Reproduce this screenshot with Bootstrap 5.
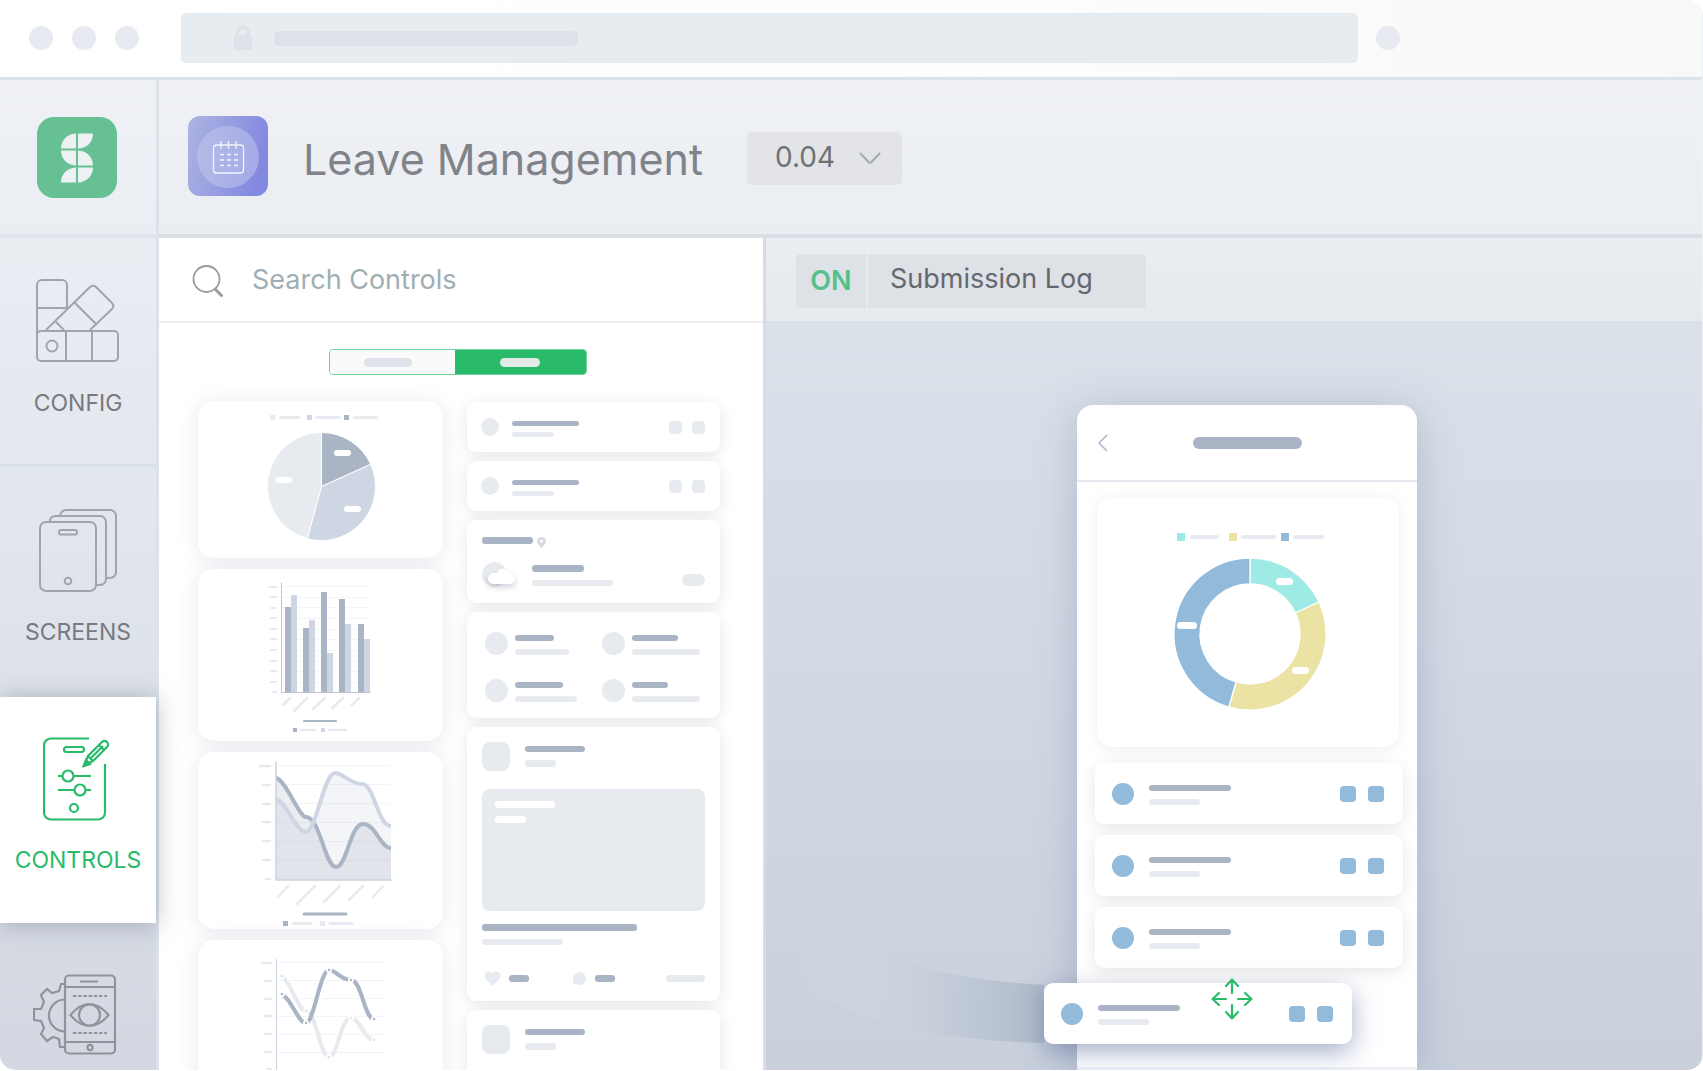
<!DOCTYPE html>
<html lang="en">
<head>
<meta charset="utf-8">
<meta name="viewport" content="width=device-width, initial-scale=1">
<title>Leave Management</title>
<link href="https://cdn.jsdelivr.net/npm/bootstrap@5.3.0/dist/css/bootstrap.min.css" rel="stylesheet">
<style>
:root{--ink:#a9b4c5;--mid:#cfd6e3;--pale:#e7ebf0;--rule:#dbe2ea;--green:#2abb6a;--blue:#91badb}
body{font-family:Inter,"Liberation Sans",sans-serif;background:#fff;overflow:hidden}
svg{display:block;flex:none}
.app-frame{height:100vh;border-radius:16px;overflow:hidden;border-bottom:1px solid #fff;border-right:1px solid #eef1f5}
/* browser chrome */
.chrome{height:80px;border-bottom:3px solid #dde2ea;background:linear-gradient(90deg,#fff,#fefefe 50%,#f8f8f8);padding:0 29px 2px}
.dots{gap:19px}
.dot-c{width:24px;height:24px;border-radius:50%;background:#e7eaf0}
.address{width:1177px;height:50px;border-radius:5px;background:#e7ecf0;margin:0 18px 0 42px;padding-left:53px}
.address-text{width:304px;height:15px;border-radius:5px;background:#dde2e9;margin:2px 0 0 22px}
.shell{background:linear-gradient(#eff1f5,#e3e7ee 40%,#d2d7e1);min-height:0}
/* sidebar */
.side{width:159px;border-right:3px solid var(--rule)}
.brand-cell{height:158px;border-bottom:4px solid #dfe4ea;padding-top:37px;padding-left:37px}
.tile{height:229px;border-bottom:3px solid #d8e0e9;padding-top:41px;color:#777a80;font-size:23px;line-height:24px;font-weight:400;text-decoration:none}
.tile svg{color:#a1a4aa;margin-bottom:28px}
.tile.active{background:#fff;color:var(--green);border-bottom:0;box-shadow:0 2px 24px rgba(95,105,120,.42);margin:1px 0 2px;height:226px;padding-top:40px}
.tile.active svg{color:var(--green);margin-right:4px;margin-bottom:27px}
.tile.last svg{color:#8f949c;margin-top:8px;margin-right:6px}
/* heading row */
.app-head{height:158px;border-bottom:4px solid #d9dfe5;padding:0 29px 2px}
.app-title{font-size:43px;line-height:48px;font-weight:400;color:#808388;margin:5px 44px 0 35px}
.version{width:155px;height:53px;margin-top:5px}
.version select{appearance:none;width:100%;height:100%;border:0;border-radius:5px;background:#e2e4e8;color:#6f7275;font-size:28px;padding:0 0 4px 28px}
.version svg{position:absolute;right:21px;top:20px;pointer-events:none}
/* controls panel */
.panel{width:607px;flex:none;background:#fff;border-right:3px solid #d6dde5;overflow:hidden}
.search{height:85px;border-bottom:2px solid #efefef;padding-left:33px;margin:0}
.search svg{margin-top:3px}
.search input{border:0;outline:0;background:none;font-size:27px;line-height:32px;width:400px;padding:0;margin:1px 0 0 28px}
.search input::placeholder{color:#a0aeb3;opacity:1}
.segment{display:grid;grid-template-columns:126fr 132fr;width:258px;height:26px;margin:26px 176px 26px 170px;border:1px solid #6fd19b;border-radius:4px;overflow:hidden}
.segment button{border:0;background:#fafafa;padding:0}
.segment button+button{background:var(--green)}
.segment i{display:block;width:48px;height:9px;border-radius:5px;background:#dfe2ea;margin:auto;margin-left:34px}
.segment button+button i{width:40px;background:#e3ebe8;margin-left:45px}
.widgets{display:grid;grid-template-columns:245fr 253fr;column-gap:24px;padding:0 43px 0 39px}
.stack-l{gap:11px}.stack-r{gap:9px;padding-top:1px}
.tilecard{background:#fff;border-radius:16px;box-shadow:0 2px 20px rgba(90,90,140,.14)}
.tilecard svg{width:100%;height:auto}
.slab{background:#fff;border-radius:9px;box-shadow:0 3px 16px rgba(0,0,0,.1)}
/* placeholder strokes */
.ln{display:block;height:6px;border-radius:3px;background:var(--pale)}
.ln.dk{background:var(--ink)}.ln.wh{background:#fff}.ln.fat{height:7px}
.w20{width:20px}.w31{width:31px}.w36{width:36px}.w39{width:39px}.w42{width:42px}.w46{width:46px}.w48{width:48px}.w51{width:51px}.w52{width:52px}.w54{width:54px}.w60{width:60px}.w62{width:62px}.w67{width:67px}.w68{width:68px}.w81{width:81px}.w82{width:82px}.w155{width:155px}
.round{border-radius:50%;background:var(--pale);flex:none}
.sq{border-radius:4px;background:var(--pale);flex:none}
.item{height:50px;padding:0 15px 0 14px}
.item .round{width:18px;height:18px;margin-right:13px}
.item .sq{width:13px;height:13px;margin-left:10px}
.item .ln{height:5px}.item .ln+.ln{margin-top:6px}
.weather{height:83px;padding:17px 15px 0}
.weather-row{margin-top:13px}
.toggle{width:23px;height:12px;border-radius:6px;background:var(--pale);margin-top:6px}
.facts{height:106px;padding:20px 0 0 18px;display:grid;grid-template-columns:117px 1fr;grid-auto-rows:47px}
.facts .round{width:23px;height:23px;margin-right:7px}
.facts .ln+.ln{margin-top:8px}
.facts .pair{padding-top:3px}
.post{height:274px;padding:15px 15px 0}
.avatar{width:28px;height:29px;border-radius:8px;background:var(--pale);margin-right:15px}
.photo{height:122px;border-radius:8px;background:var(--pale);margin:18px 0 13px;padding:12px 13px}
.post-foot{margin-top:26px}
.like{margin:0 8px 0 2px}
.reply{margin:0 9px 0 44px}
/* canvas */
.canvas{min-width:0;background:linear-gradient(#dde3eb,#c9d0dc)}
.toolbar{height:85px;border-bottom:2px solid #dbe0e8;background:linear-gradient(#eaedf1,#e6e9ee);padding:3px 30px 0}
.toolbar button{height:54px;border:0;background:#dee1e6;color:#65686e;font-size:27px;padding:0}
.toolbar .state{width:70px;border-radius:4px 0 0 4px;color:#55c088;font-weight:600}
.toolbar .log{width:278px;border-radius:0 4px 4px 0;margin-left:2px;text-align:left;padding:0 0 4px 22px}
.stage{padding:82px 0 0 26px;min-height:0}
.phone{width:340px;background:#fff;border-radius:16px 16px 0 0;border-bottom:3px solid #eef1f6;box-shadow:0 6px 40px rgba(110,120,165,.38)}
.phone-head{height:77px;border-bottom:2px solid #e6eaf0;padding:0 21px}
.phone-head i{width:109px;height:12px;border-radius:6px;background:var(--ink)}
.back-space{width:9px}
.phone-body{padding:15px 14px 0 18px}
.phone-body .tilecard{margin:0 4px 16px 2px;box-shadow:0 2px 14px rgba(90,90,140,.1)}
.entry{width:308px;height:61px;padding:0 19px 0 17px;margin-bottom:11px}
.entry .round{width:22px;height:22px;background:var(--blue);margin-right:15px}
.entry .sq{width:16px;height:16px;background:var(--blue);margin-left:12px}
.entry .ln+.ln{margin-top:8px}
.entry .pair{padding-top:2px}
.dragged{position:absolute;left:-33px;top:578px;box-shadow:0 8px 26px rgba(80,100,150,.5)}
.dragged .mover{position:absolute;left:167px;top:-5px}
.trail{position:absolute;left:-273px;top:520px}
</style>
<script src="https://cdn.jsdelivr.net/npm/bootstrap@5.3.0/dist/js/bootstrap.bundle.min.js"></script>
</head>
<body>
<div class="app-frame d-flex flex-column">
  <header class="chrome d-flex align-items-center flex-shrink-0">
    <div class="dots d-flex flex-shrink-0"><span class="dot-c"></span><span class="dot-c"></span><span class="dot-c"></span></div>
    <div class="address d-flex align-items-center">
      <svg width="18" height="24" viewBox="0 0 18 24"><rect y="9" width="18" height="15" rx="2" fill="#dde1e8"/><path d="M3.500 10V7a5.500 5.500 0 0 1 11 0v3" fill="none" stroke="#dde1e8" stroke-width="3"/></svg>
      <span class="address-text"></span>
    </div>
    <span class="dot-c flex-shrink-0"></span>
  </header>

  <div class="shell d-flex flex-fill">
    <nav class="side d-flex flex-column flex-shrink-0" aria-label="Sections">
      <div class="brand-cell flex-shrink-0">
        <svg width="80" height="81" viewBox="0 0 80 81"><rect width="80" height="81" rx="17" fill="#67c093"/>
          <g fill="#eef1f4"><path d="M39 16.500V31.500H24C24 23 31 16.500 39 16.500zM41 16.500H56C56 25 50 31.500 41 31.500zM24 33.500H39V48.500C30 48 24 42 24 33.500zM41 33.500C50 34 56 40 56 48.500H41zM39 50.500V65.500H24C24 57 30 51 39 50.500zM41 50.500H56C56 59 49 65.500 41 65.500z"/></g></svg>
      </div>
      <a href="#" class="tile d-flex flex-column align-items-center flex-shrink-0">
        <svg width="84" height="84" viewBox="0 0 84 84" fill="none" stroke="currentColor" stroke-width="2"><path d="M1 55V6a5 5 0 0 1 5-5h20a5 5 0 0 1 5 5v25M2 29h29M10 51L54 8a4 4 0 0 1 6 0L76 24a4 4 0 0 1 0 6L54 51M39 24l21 21M20 43l8 8"/><rect x="1" y="52" width="81" height="30" rx="4"/><path d="M30 52v31M56 52v31"/><circle cx="16" cy="67" r="5.500"/></svg>
        CONFIG</a>
      <a href="#" class="tile d-flex flex-column align-items-center flex-shrink-0">
        <svg width="78" height="84" viewBox="0 0 78 84" fill="none" stroke="currentColor" stroke-width="2"><rect x="1" y="14" width="56" height="69" rx="6"/><path d="M11 13.500C11 10 13 8 17 8h44a6 6 0 0 1 6 6v57a6 6 0 0 1-6 6h-4M21 7.500C22 4 24 2 27 2h44a6 6 0 0 1 6 6v56a6 6 0 0 1-6 6h-4"/><rect x="20" y="22" width="18" height="4.500" rx="2"/><circle cx="29" cy="73" r="3.300"/></svg>
        SCREENS</a>
      <a href="#" class="tile active d-flex flex-column align-items-center flex-shrink-0 position-relative" aria-current="page">
        <svg width="67" height="84" viewBox="0 0 67 84" fill="none" stroke="currentColor" stroke-width="2.200"><path d="M46 1.500H8a7 7 0 0 0-7 7v67a7 7 0 0 0 7 7h47a7 7 0 0 0 7-7V27"/><rect x="21" y="10" width="20" height="5" rx="2.500"/><path d="M41 28l4-9L59 5a3.500 3.500 0 0 1 5 5L50 24zM45 19l5 5M56 8l5 5M48 21L60 9"/><path d="M41 29l2-6 4 4z" fill="currentColor"/><path d="M15 39h4M31 39h17M15 53h17M43 53h5"/><circle cx="25" cy="39" r="5.500"/><circle cx="37" cy="53" r="5.500"/><circle cx="31" cy="71" r="4"/></svg>
        CONTROLS</a>
      <a href="#" class="tile last d-flex flex-column align-items-center flex-shrink-0" aria-label="Preview">
        <svg width="84" height="82" viewBox="0 0 84 82" fill="none" stroke="currentColor" stroke-width="2.200"><rect x="32" y="1.500" width="50" height="78" rx="4"/><path d="M32 13h50M32 68h50M47 7.500h18"/><circle cx="57" cy="73.500" r="2.600"/><path d="M37.500 41q9-11 19-11t19 11q-9 11-19 11t-19-11z"/><circle cx="56.500" cy="41" r="10.500"/><path d="M40 22h34M40 59h34" stroke-dasharray="3.500 1.700"/><path d="M32 10h-4l-2 7-7 2-5-4-6 6 3 7-3 7H1v11l7 1 3 7-3 6 6 7 6-4 6 2 1 8h5M32 25.500a16 16 0 0 0 0 32"/></svg>
      </a>
    </nav>

    <main class="flex-fill d-flex flex-column" style="min-width:0">
      <header class="app-head d-flex align-items-center flex-shrink-0">
        <svg width="80" height="80" viewBox="0 0 80 80"><defs><linearGradient id="appfill" x1="0" y1="0" x2="1" y2=".25"><stop offset="0" stop-color="#adb4e1"/><stop offset=".5" stop-color="#989fe1"/><stop offset="1" stop-color="#8389e0"/></linearGradient></defs><rect width="80" height="80" rx="12" fill="url(#appfill)"/><circle cx="40" cy="41" r="31" fill="#c3caed" opacity=".5"/><g fill="none" stroke="#f2f4fb" stroke-width="1.300"><rect x="25.500" y="29" width="30" height="28" rx="3"/><path d="M33 25v8M40.500 25v8M48 25v8"/><path d="M32 38.500h4m3 0h4m3 0h4M32 44h4m3 0h4m3 0h4M32 49.500h4m3 0h4m3 0h4"/></g></svg>
        <h1 class="app-title text-nowrap">Leave Management</h1>
        <div class="version position-relative flex-shrink-0">
          <select aria-label="Version"><option>0.04</option></select>
          <svg width="22" height="13" viewBox="0 0 22 13" fill="none" stroke="#9cabb3" stroke-width="2"><path d="M1 1l8.500 9q1.500 1.500 3 0L21 1"/></svg>
        </div>
      </header>

      <div class="d-flex flex-fill" style="min-height:0">
        <section class="panel">
          <label class="search d-flex align-items-center">
            <svg width="32" height="32" viewBox="0 0 32 32" fill="none" stroke="#9b9b9b"><circle cx="14.500" cy="14" r="13" stroke-width="1.800"/><path d="M24 25l5.500 5.500" stroke-width="3" stroke-linecap="round"/></svg>
            <input type="search" placeholder="Search Controls" aria-label="Search Controls">
          </label>
          <div class="segment">
            <button type="button" aria-label="First set"><i></i></button>
            <button type="button" aria-label="Second set"><i></i></button>
          </div>
          <div class="widgets">
            <div class="stack-l d-flex flex-column">
              <div class="tilecard">
                <svg viewBox="0 0 245 157"><g fill="#e7eaef"><rect x="72" y="14" width="5" height="5"/><rect x="81" y="15" width="21" height="3" rx="1.500"/><rect x="117" y="15" width="26" height="3" rx="1.500"/><rect x="155" y="15" width="25" height="3" rx="1.500"/></g><rect x="109" y="14" width="5" height="5" fill="#cfd6e3"/><rect x="146" y="14" width="5" height="5" fill="#a9b4c5"/>
                <g stroke="#fff" stroke-width="1"><path d="M123.500 85.500V31.500A54 54 0 0 1 172.700 63.300z" fill="#a9b4c5"/><path d="M123.500 85.500L172.700 63.300A54 54 0 0 1 109.200 137.600z" fill="#cfd6e3"/><path d="M123.500 85.500L109.200 137.600A54 54 0 0 1 123.500 31.500z" fill="#e7ebf0"/></g>
                <g fill="#fff"><rect x="136" y="49" width="17" height="6" rx="3"/><rect x="77" y="76" width="17" height="6" rx="3"/><rect x="146" y="105" width="17" height="6" rx="3"/></g></svg>
              </div>
              <div class="tilecard">
                <svg viewBox="0 0 245 172" fill="none" stroke-linecap="round"><path stroke="#f4f5f8" d="M84 17.500h88M84 28.500h88M84 38.500h88M84 49.500h88M84 60.500h88M84 70.500h88M84 81.500h88M84 92.500h88M84 102.500h88M84 113.500h88"/>
                <path stroke="#e7eaf0" stroke-width="2" d="M71 18h7M73 28h5M73 39h5M73 49h5M73 60h5M73 70h5M73 81h5M73 92h5M73 102h5M73 113h5M75 123h3"/>
                <path fill="#a9b4c5" d="M87 38h6v86h-6zM105 59h6v65h-6zM123 23h6v101h-6zM141 30h6v94h-6zM160 55h6v69h-6z"/><path fill="#cfd6e3" d="M93 26h6v98h-6zM111 51h6v73h-6zM129 84h6v40h-6zM147 55h6v69h-6zM166 70h6v54h-6z"/>
                <path stroke="#bcc4d4" d="M83.500 14v109.500H172"/><path stroke="#e7eaf0" stroke-width="2.500" d="M85 136l7-7M96 142l13-13M115 140l12-11M134 139l11-10M154 136l7-7"/>
                <path stroke="#a9b4c5" stroke-width="2" d="M106 152h32"/><path fill="#a9b4c5" d="M95 159h4v4h-4z"/><path fill="#cfd6e3" d="M123 159h4v4h-4z"/><path stroke="#e7eaf0" stroke-width="2.500" d="M103 161h14M131 161h17"/></svg>
              </div>
              <div class="tilecard">
                <svg viewBox="0 0 245 177" fill="none" stroke-linecap="round">
                <path fill="#f3f5f9" d="M78 47C88 49 98 80 108 80S126 21 137 21C145 21 152 32 164 32S180 74 193 74V128H78z"/><path fill="#8f94a8" fill-opacity=".17" d="M78 26C88 28 101 65 108 65C122 65 127 115 138 115S152 72 165 72S182 96 193 96V128H78z"/>
                <path stroke="#8f94a8" stroke-opacity=".1" d="M79 13.500h113M79 32.500h113M79 51.500h113M79 70.500h113M79 89.500h113M79 108.500h113"/>
                <path stroke="#e7eaf0" stroke-width="2.500" d="M62 14h10M65 33h7M65 52h7M65 70h7M65 89h7M65 108h7M68 127h4"/>
                <path stroke="#a9b4c5" stroke-width="4" stroke-linecap="butt" d="M78 26C88 28 101 65 108 65C122 65 127 115 138 115S152 72 165 72S182 96 193 96"/><path stroke="#cfd6e3" stroke-width="4" stroke-linecap="butt" d="M78 47C88 49 98 80 108 80S126 21 137 21C145 21 152 32 164 32S180 74 193 74"/>
                <path stroke="#cbd2df" stroke-width="1.500" d="M78 10v118h115"/><path stroke="#e9ebf1" stroke-width="2.500" d="M80 145l10-11M99 152l18-18M126 150l16-16M151 148l14-14M175 145l10-11"/>
                <path stroke="#a9b4c5" stroke-width="3" d="M106 162h42"/><path fill="#a9b4c5" d="M85 169h5v5h-5z"/><path fill="#e7eaf0" d="M122 169h5v5h-5z"/><path stroke="#e7eaf0" stroke-width="3" d="M95 171.500h18M132 171.500h22"/></svg>
              </div>
              <div class="tilecard">
                <svg viewBox="0 0 245 176" fill="none" stroke-linecap="round"><path stroke="#f3f4f7" d="M79 22.500h107M79 40.500h107M79 58.500h107M79 76.500h107M79 94.500h107M79 112.500h107"/><path stroke="#c9d0de" d="M78.500 19.500v111"/><path stroke="#e7eaf0" d="M79 130.500h107"/>
                <path stroke="#e7eaf0" stroke-width="2.500" d="M64 23h9M67 41h6M67 59h6M67 76h6M67 94h6M67 112h6M69 129h4"/>
                <path stroke="#e7ebf0" stroke-width="4" d="M84 36C94 44 100 71 108 71C118 71 122 117 131 117S142 78 153 78C162 78 166 100 176 100"/><path stroke="#a9b4c5" stroke-width="4" d="M84 54C94 60 100 83 108 83S122 30 131 30C138 30 142 40 153 40C164 40 166 79 176 79"/>
                <g fill="#fff"><circle cx="84" cy="36" r="3"/><circle cx="108" cy="71" r="3"/><circle cx="131" cy="117" r="3"/><circle cx="153" cy="78" r="3"/><circle cx="176" cy="100" r="3"/><circle cx="84" cy="54" r="3"/><circle cx="108" cy="83" r="3"/><circle cx="131" cy="30" r="3"/><circle cx="153" cy="40" r="3"/><circle cx="176" cy="79" r="3"/></g>
                <path stroke="#dde1e9" stroke-width="2.500" d="M84 36h0M108 71h0M131 117h0M153 78h0M176 100h0"/><path stroke="#a9b4c5" stroke-width="2.500" d="M84 54h0M108 83h0M131 30h0M153 40h0M176 79h0"/></svg>
              </div>
            </div>

            <div class="stack-r d-flex flex-column">
              <div class="slab item d-flex align-items-center"><span class="round"></span><div class="me-auto pt-1"><span class="ln dk w67"></span><span class="ln w42"></span></div><span class="sq"></span><span class="sq"></span></div>
              <div class="slab item d-flex align-items-center"><span class="round"></span><div class="me-auto pt-1"><span class="ln dk w67"></span><span class="ln w42"></span></div><span class="sq"></span><span class="sq"></span></div>
              <div class="slab weather">
                <div class="d-flex"><span class="ln dk fat w51"></span><svg class="ms-1" width="9" height="11" viewBox="0 0 9 11"><path d="M4.500 11C2 8.500 0 6.500 0 4.500a4.500 4.500 0 0 1 9 0C9 6.500 7 8.500 4.500 11z" fill="#d3dae6"/><circle cx="4.500" cy="4" r="1.600" fill="#fff"/></svg></div>
                <div class="weather-row d-flex">
                  <svg width="50" height="32" viewBox="0 0 50 32" overflow="visible"><circle cx="12.500" cy="13.500" r="12.500" fill="#e7ebf0"/><path d="M12 23a5.500 5.500 0 0 1-1-11h4a6 6 0 0 1 11.500 0h1a5.500 5.500 0 0 1 0 11z" fill="#fff" style="filter:drop-shadow(0 3px 3px rgba(90,100,120,.3))"/></svg>
                  <div class="me-auto"><span class="ln dk fat w52 mt-1"></span><span class="ln w81 mt-2"></span></div>
                  <span class="toggle align-self-center"></span>
                </div>
              </div>
              <div class="slab facts">
                <div class="d-flex"><span class="round"></span><div class="pair"><span class="ln dk w39"></span><span class="ln w54"></span></div></div>
                <div class="d-flex"><span class="round"></span><div class="pair"><span class="ln dk w46"></span><span class="ln w68"></span></div></div>
                <div class="d-flex"><span class="round"></span><div class="pair"><span class="ln dk w48"></span><span class="ln w62"></span></div></div>
                <div class="d-flex"><span class="round"></span><div class="pair"><span class="ln dk w36"></span><span class="ln w68"></span></div></div>
              </div>
              <div class="slab post">
                <div class="d-flex"><span class="avatar"></span><div class="pt-1"><span class="ln dk w60"></span><span class="ln fat w31 mt-2"></span></div></div>
                <div class="photo"><span class="ln wh fat w60"></span><span class="ln wh fat w31 mt-2"></span></div>
                <span class="ln dk fat w155"></span><span class="ln w81 mt-2"></span>
                <div class="post-foot d-flex align-items-center">
                  <svg class="like" width="17" height="15" viewBox="0 0 17 15"><path d="M8.500 15L1.500 8C-2 4 3-2 8.500 2 14-2 19 4 15.500 8z" fill="#e7ebf0"/></svg><span class="ln dk fat w20"></span>
                  <svg class="reply" width="13" height="13" viewBox="0 0 13 13"><path d="M0 13V6.500A6.500 6.500 0 1 1 6.500 13 6 6 0 0 1 3 12z" fill="#e7ebf0"/></svg><span class="ln dk fat w20"></span><span class="ln fat w39 ms-auto"></span>
                </div>
              </div>
              <div class="slab post"><div class="d-flex"><span class="avatar"></span><div class="pt-1"><span class="ln dk w60"></span><span class="ln fat w31 mt-2"></span></div></div></div>
            </div>
          </div>
        </section>

        <section class="canvas flex-fill d-flex flex-column">
          <div class="toolbar d-flex align-items-center flex-shrink-0">
            <button type="button" class="state" aria-pressed="true">ON</button><button type="button" class="log">Submission Log</button>
          </div>
          <div class="stage flex-fill d-flex justify-content-center">
            <div class="phone position-relative">
              <svg class="trail" width="240" height="122" viewBox="0 0 240 122"><defs><linearGradient id="fade"><stop offset="0" stop-color="#d5dbe6" stop-opacity=".1"/><stop offset=".4" stop-color="#cbd2de" stop-opacity=".7"/><stop offset="1" stop-color="#aebac9"/></linearGradient></defs><path d="M0 0C70 33 140 54 240 60V118C140 116 70 100 0 65z" fill="url(#fade)"/></svg>
              <div class="phone-head d-flex align-items-center">
                <svg width="10" height="18" viewBox="0 0 10 18" fill="none" stroke="#a9b6c8" stroke-width="1.500"><path d="M9 1L1.500 8.500q-.700.500 0 1L9 17"/></svg><i class="mx-auto"></i><span class="back-space"></span>
              </div>
              <div class="phone-body">
                <div class="tilecard">
                  <svg viewBox="0 0 302 250"><path fill="#9eebe6" d="M80 36h8v8h-8z"/><path fill="#ebe3a3" d="M132 36h8v8h-8z"/><path fill="#91badb" d="M184 36h8v8h-8z"/><g fill="#e7eaf0"><rect x="93" y="38" width="29" height="4" rx="2"/><rect x="144" y="38" width="35" height="4" rx="2"/><rect x="196" y="38" width="31" height="4" rx="2"/></g>
                  <g stroke="#fff" stroke-width="1.300"><path fill="#9eebe6" d="M153 61A76 76 0 0 1 222 105L198.400 116A50 50 0 0 0 153 87z"/><path fill="#ebe3a3" d="M222 105A76 76 0 0 1 131.800 210L139 185A50 50 0 0 0 198.400 116z"/><path fill="#91badb" d="M131.800 210A76 76 0 0 1 153 61V87A50 50 0 0 0 139 185z"/></g>
                  <g fill="#fff"><rect x="179" y="81" width="17" height="7" rx="3.500"/><rect x="195" y="170" width="17" height="7" rx="3.500"/><rect x="80" y="125" width="20" height="7" rx="3.500"/></g></svg>
                </div>
                <div class="slab entry d-flex align-items-center"><span class="round"></span><div class="pair me-auto"><span class="ln dk w82"></span><span class="ln w51"></span></div><span class="sq"></span><span class="sq"></span></div>
                <div class="slab entry d-flex align-items-center"><span class="round"></span><div class="pair me-auto"><span class="ln dk w82"></span><span class="ln w51"></span></div><span class="sq"></span><span class="sq"></span></div>
                <div class="slab entry d-flex align-items-center"><span class="round"></span><div class="pair me-auto"><span class="ln dk w82"></span><span class="ln w51"></span></div><span class="sq"></span><span class="sq"></span></div>
              </div>
              <div class="slab entry dragged d-flex align-items-center"><span class="round"></span><div class="pair me-auto"><span class="ln dk w82"></span><span class="ln w51"></span></div><span class="sq"></span><span class="sq"></span>
                <svg class="mover" width="42" height="42" viewBox="0 0 42 42" fill="none" stroke="#2abb6a" stroke-width="2.200" stroke-linecap="round" stroke-linejoin="round"><path d="M21 15V1.500M15 8l6-6.500L27 8M21 27v13.500M15 34l6 6.500 6-6.500M15 21H1.500M8 15l-6.500 6L8 27M27 21h13.500M34 15l6.500 6-6.500 6"/></svg>
              </div>
            </div>
          </div>
        </section>
      </div>
    </main>
  </div>
</div>
</body>
</html>
